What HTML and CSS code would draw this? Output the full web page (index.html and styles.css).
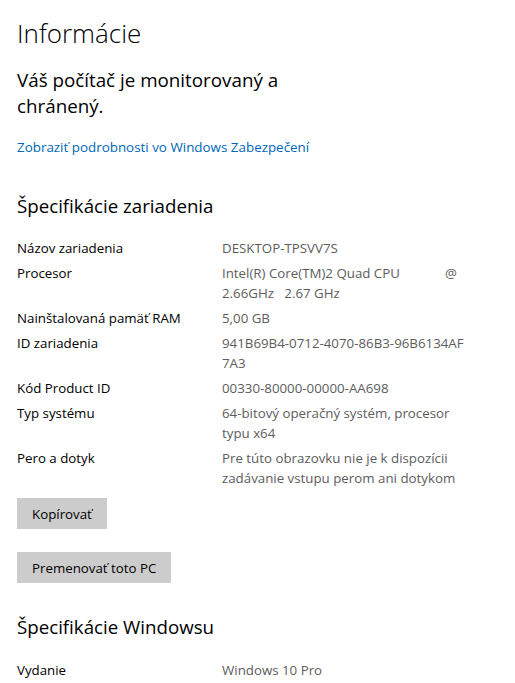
FILE: index.html
```html
<!DOCTYPE html>
<html lang="sk">
<head>
    <meta charset="UTF-8">
    <meta name="viewport" content="width=device-width, initial-scale=1.0">
    <title>Informácie</title>
    <link rel="stylesheet" href="styles.css">
</head>
<body>
    <div class="page">
        <h1 class="title">Informácie</h1>

        <p class="status">Váš počítač je monitorovaný a<br>chránený.</p>
        <a class="link" href="#">Zobraziť podrobnosti vo Windows Zabezpečení</a>

        <h2 class="section">Špecifikácie zariadenia</h2>
        <div class="specs">
            <div class="row">
                <div class="label">Názov zariadenia</div>
                <div class="value">DESKTOP-TPSVV7S</div>
            </div>
            <div class="row">
                <div class="label">Procesor</div>
                <div class="value">
                    <div class="cpu"><span>Intel(R) Core(TM)2 Quad CPU</span><span>@</span></div>
                    2.66GHz&nbsp;&nbsp; 2.67 GHz
                </div>
            </div>
            <div class="row">
                <div class="label">Nainštalovaná pamäť RAM</div>
                <div class="value">5,00 GB</div>
            </div>
            <div class="row">
                <div class="label">ID zariadenia</div>
                <div class="value">941B69B4-0712-4070-86B3-96B6134AF<br>7A3</div>
            </div>
            <div class="row">
                <div class="label">Kód Product ID</div>
                <div class="value">00330-80000-00000-AA698</div>
            </div>
            <div class="row">
                <div class="label">Typ systému</div>
                <div class="value">64-bitový operačný systém, procesor<br>typu x64</div>
            </div>
            <div class="row">
                <div class="label">Pero a dotyk</div>
                <div class="value">Pre túto obrazovku nie je k dispozícii<br>zadávanie vstupu perom ani dotykom</div>
            </div>
        </div>

        <div class="actions">
            <button class="btn" type="button">Kopírovať</button>
            <button class="btn" type="button">Premenovať toto PC</button>
        </div>

        <h2 class="section section-win">Špecifikácie Windowsu</h2>
        <div class="specs specs-win">
            <div class="row">
                <div class="label">Vydanie</div>
                <div class="value">Windows 10 Pro</div>
            </div>
        </div>
    </div>
</body>
</html>
```

FILE: styles.css
```css
body {
    margin: 0;
    font-family: "Open Sans", "Noto Sans", sans-serif;
    color: #000;
    background: #fff;
    overflow: hidden;
}
.page {
    padding: 0 17px;
}
.title {
    margin: 13px 0 0;
    font-size: 26px;
    font-weight: 300;
    line-height: 40px;
}
.status {
    margin: 14px 0 0;
    font-size: 18.8px;
    font-weight: 400;
    line-height: 26px;
}
.link {
    display: block;
    margin-top: 18px;
    font-size: 13.4px;
    line-height: 20px;
    color: #0067b8;
    text-decoration: none;
}
.section {
    margin: 35px 0 0;
    font-size: 18.7px;
    font-weight: 400;
    line-height: 28px;
}
.specs {
    margin-top: 18px;
}
.row {
    display: flex;
    font-size: 13.3px;
    line-height: 20px;
    margin-bottom: 5px;
}
.label {
    width: 205px;
    flex-shrink: 0;
    white-space: nowrap;
}
.value {
    width: 240px;
    color: #5d5d5d;
    white-space: nowrap;
}
.cpu {
    display: flex;
    justify-content: space-between;
    padding-right: 5px;
}
.actions {
    display: flex;
    flex-direction: column;
    align-items: flex-start;
    gap: 23px;
    margin-top: 10px;
}
.btn {
    height: 31px;
    padding: 0 15px;
    border: none;
    background-color: #cccccc;
    font-family: inherit;
    font-size: 13.3px;
    color: #000;
}
.section-win {
    margin-top: 30px;
}
.specs-win {
    margin-top: 19px;
}
```
